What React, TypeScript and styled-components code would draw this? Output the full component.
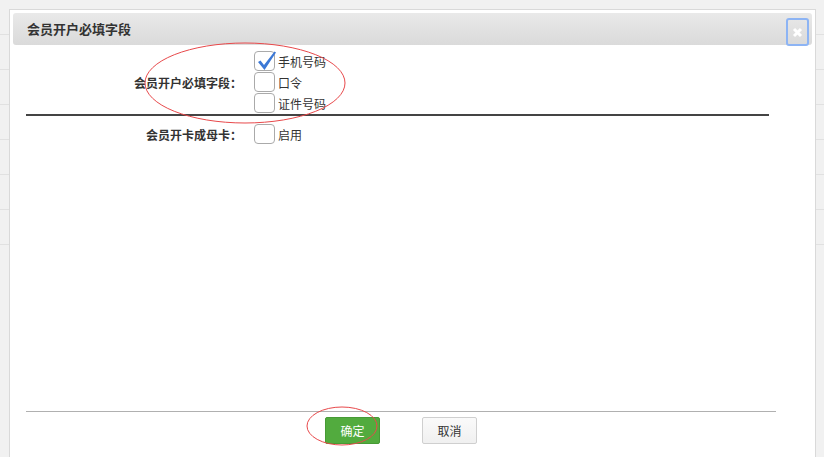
import React, { FC } from 'react';
import styled, { createGlobalStyle } from 'styled-components';

const GlobalStyle = createGlobalStyle`
  html, body {
    margin: 0;
    padding: 0;
    background: #f1f1f1;
    font-family: "Noto Sans CJK SC", "Noto Sans", sans-serif;
    font-size: 12px;
    color: #333;
  }
`;

const Page = styled.div`
  position: relative;
  width: 824px;
  height: 457px;
  overflow: hidden;
`;

const Backdrop = styled.div`
  display: flex;
  flex-direction: column;
`;

const BackdropRow = styled.div`
  height: 35px;
  box-sizing: border-box;
  border-bottom: 1px solid #e1e1e1;
`;

const Modal = styled.div`
  position: absolute;
  left: 9px;
  top: 9px;
  width: 807px;
  height: 470px;
  box-sizing: border-box;
  padding: 3px;
  background: #fff;
  border: 1px solid #d9d9d9;
  display: flex;
  flex-direction: column;
`;

const Header = styled.div`
  height: 32px;
  display: flex;
  align-items: flex-start;
  border-radius: 3px;
  background: linear-gradient(180deg, #e9e9e9 0%, #dadada 100%);
`;

const Title = styled.h1`
  margin: 0 0 0 14px;
  line-height: 32px;
  font-size: 13px;
  font-weight: bold;
  color: #333;
`;

const CloseButton = styled.button`
  margin: 5px 3px 0 auto;
  width: 23px;
  height: 28px;
  padding: 0;
  box-sizing: border-box;
  border: 2px solid #8db4f4;
  border-radius: 3px;
  background: transparent;
  display: flex;
  align-items: center;
  justify-content: center;
`;

const Body = styled.div`
  height: 366px;
  padding-top: 6px;
  box-sizing: border-box;
`;

const FieldRow = styled.div<{ $pad?: number }>`
  display: grid;
  grid-template-columns: 229px 1fr;
  column-gap: 12px;
  align-items: center;
  padding-top: ${(p) => p.$pad ?? 0}px;
`;

const Label = styled.div`
  text-align: right;
  font-weight: bold;
  color: #333;
`;

const Options = styled.div`
  display: flex;
  flex-direction: column;
  gap: 1px;
`;

const Option = styled.label`
  display: flex;
  align-items: center;
  gap: 3px;
  height: 20px;
  color: #333;
`;

const Box = styled.span`
  position: relative;
  width: 21px;
  height: 20px;
  box-sizing: border-box;
  border: 1px solid #aaa;
  border-radius: 4px;
  background: #fff;
`;

const Tick = styled.svg`
  position: absolute;
  left: 2px;
  top: -1px;
`;

const Divider = styled.hr`
  margin: 1px 0 0 13px;
  width: 743px;
  height: 2px;
  border: 0;
  background: #444;
`;

const Footer = styled.div`
  margin-left: 13px;
  width: 750px;
  border-top: 1px solid #b0b0b0;
  padding-top: 5px;
  display: flex;
  justify-content: center;
  gap: 42px;
`;

const Button = styled.button<{ $primary?: boolean }>`
  width: 55px;
  height: 27px;
  padding: 0;
  border-radius: 2px;
  font-family: inherit;
  font-size: 12px;
  border: 1px solid ${(p) => (p.$primary ? '#479a35' : '#cfcfcf')};
  background: ${(p) => (p.$primary ? '#52ab3e' : 'linear-gradient(180deg, #fafafa, #f0f0f0)')};
  color: ${(p) => (p.$primary ? '#fff' : '#333')};
`;

const Marks = styled.svg`
  position: absolute;
  left: 0;
  top: 0;
  pointer-events: none;
`;

const Check: FC<{ checked?: boolean; text: string }> = ({ checked, text }) => (
  <Option>
    <Box>
      {checked && (
        <Tick width="20" height="20" viewBox="0 0 20 20">
          <path d="M1 11 L3.5 9.5 L7 14 L17.5 0.5 L19 1.5 L7.5 19 Z" fill="#3b78d6" />
        </Tick>
      )}
    </Box>
    {text}
  </Option>
);

const App: FC = () => {
  return (
    <Page>
      <GlobalStyle />
      <Backdrop>
        {Array.from({ length: 7 }).map((_, i) => (
          <BackdropRow key={i} />
        ))}
      </Backdrop>
      <Modal>
        <Header>
          <Title>会员开户必填字段</Title>
          <CloseButton aria-label="关闭">
            <svg width="11" height="11" viewBox="0 0 11 11">
              <path d="M2 2 L9 9 M9 2 L2 9" stroke="#fff" strokeWidth="3" />
            </svg>
          </CloseButton>
        </Header>
        <Body>
          <FieldRow>
            <Label>会员开户必填字段：</Label>
            <Options>
              <Check checked text="手机号码" />
              <Check text="口令" />
              <Check text="证件号码" />
            </Options>
          </FieldRow>
          <Divider />
          <FieldRow $pad={8}>
            <Label>会员开卡成母卡：</Label>
            <Options>
              <Check text="启用" />
            </Options>
          </FieldRow>
        </Body>
        <Footer>
          <Button $primary>确定</Button>
          <Button>取消</Button>
        </Footer>
      </Modal>
      <Marks width="824" height="457">
        <ellipse cx="245" cy="83" rx="100" ry="40" fill="none" stroke="#e8494b" strokeWidth="1" />
        <ellipse cx="342" cy="426" rx="35" ry="19" fill="none" stroke="#e8494b" strokeWidth="1" />
      </Marks>
    </Page>
  );
};

export default App;
